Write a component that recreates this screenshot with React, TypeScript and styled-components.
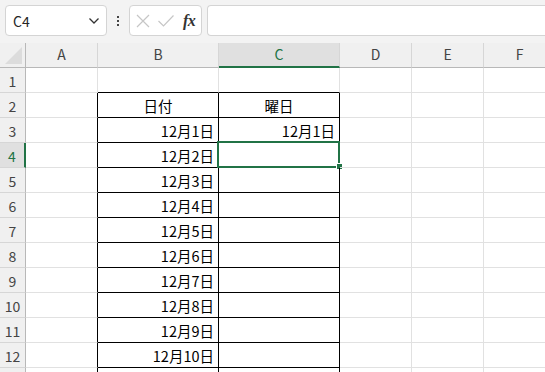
import React from "react";
import styled, { createGlobalStyle, css } from "styled-components";

const GlobalStyle = createGlobalStyle`
  html, body { margin: 0; padding: 0; background: #ffffff; overflow: hidden; }
  body { font-family: "Noto Sans CJK JP", "Noto Sans", sans-serif; }
  * { box-sizing: border-box; }
`;

const GREEN = "#217346";
const GRID = "#e1e1e1";

const Window = styled.div`
  width: 545px;
  height: 372px;
  overflow: hidden;
  background: #ffffff;
`;

const Toolbar = styled.div`
  height: 43px;
  background: #f3f3f3;
  display: flex;
  align-items: flex-start;
  padding: 5px 0 0 5px;
`;

const NameBox = styled.div`
  width: 102px;
  height: 31px;
  background: #ffffff;
  border: 1px solid #d4d4d4;
  border-radius: 4px;
  display: flex;
  align-items: center;
  justify-content: space-between;
  padding: 0 6px 0 7px;
  font-family: "Noto Sans CJK JP", sans-serif;
  font-size: 14px;
  color: #262626;
`;

const Dots = styled.div`
  width: 2px;
  height: 31px;
  margin: 0 10px 0 10px;
  display: flex;
  flex-direction: column;
  justify-content: center;
  gap: 2px;
  & > span {
    width: 2px;
    height: 2px;
    background: #444;
  }
`;

const FormulaButtons = styled.div`
  width: 73px;
  height: 31px;
  background: #ffffff;
  border: 1px solid #d4d4d4;
  border-radius: 4px;
  display: flex;
  align-items: center;
  padding: 0 0 0 5px;
  gap: 6px;
`;

const Fx = styled.span`
  font-family: "Liberation Serif", "DejaVu Serif", serif;
  font-style: italic;
  font-weight: bold;
  font-size: 16px;
  color: #333;
  margin-left: 2px;
  letter-spacing: -0.5px;
`;

const FormulaInput = styled.div`
  flex: 1;
  height: 31px;
  margin-left: 5px;
  background: #ffffff;
  border: 1px solid #d4d4d4;
  border-right: none;
  border-radius: 4px 0 0 4px;
`;

const Sheet = styled.div`
  display: grid;
  grid-template-columns: 26px 72px 121px 121px 72px 72px 72px;
  grid-auto-rows: 25px;
  font-family: "Noto Sans CJK JP", "Noto Sans", sans-serif;
`;

const Corner = styled.div`
  position: relative;
  background: #f0f0f0;
  border-right: 1px solid #b8b8b8;
  border-bottom: 1px solid #b8b8b8;
  overflow: hidden;
  & > svg { position: absolute; right: 3px; bottom: 3px; }
`;

const ColHeader = styled.div<{ $active?: boolean }>`
  background: ${(p) => (p.$active ? "#e0e0e0" : "#f0f0f0")};
  border-right: 1px solid #d6d6d6;
  border-bottom: ${(p) => (p.$active ? `2px solid ${GREEN}` : "1px solid #b8b8b8")};
  color: ${(p) => (p.$active ? GREEN : "#444")};
  font-size: 14px;
  display: flex;
  align-items: center;
  justify-content: center;
  padding-bottom: ${(p) => (p.$active ? "1px" : "2px")};
`;

const RowHeader = styled.div<{ $active?: boolean }>`
  background: ${(p) => (p.$active ? "#e0e0e0" : "#f0f0f0")};
  border-right: ${(p) => (p.$active ? `2px solid ${GREEN}` : "1px solid #b8b8b8")};
  border-bottom: 1px solid #d6d6d6;
  color: ${(p) => (p.$active ? GREEN : "#444")};
  font-size: 14px;
  display: flex;
  align-items: center;
  justify-content: center;
  padding-top: 1px;
`;

const Cell = styled.div<{ $right?: string; $bottom?: string; $align?: "left" | "center" | "right" }>`
  position: relative;
  border-right: 1px solid ${(p) => p.$right || GRID};
  border-bottom: 1px solid ${(p) => p.$bottom || GRID};
  font-size: 14.5px;
  color: #000;
  display: flex;
  align-items: center;
  padding: 1px 4px 0 4px;
  white-space: nowrap;
  ${(p) =>
    p.$align === "right"
      ? css`justify-content: flex-end;`
      : p.$align === "center"
      ? css`justify-content: center;`
      : css`justify-content: flex-start;`}
`;

const Selection = styled.div`
  position: absolute;
  left: -2px;
  top: -2px;
  width: 123px;
  height: 27px;
  border: 2px solid ${GREEN};
  pointer-events: none;
`;

const Handle = styled.div`
  position: absolute;
  left: 117px;
  top: 20px;
  width: 7px;
  height: 7px;
  background: ${GREEN};
  border: 1px solid #ffffff;
`;

const cols = ["A", "B", "C", "D", "E", "F"];
const dates = Array.from({ length: 10 }, (_, i) => `12月${i + 1}日`);
const VISIBLE_TEXT_ROWS = 12;

export default function App() {
  const rows = Array.from({ length: 13 }, (_, i) => i + 1);
  return (
    <Window>
      <GlobalStyle />
      <Toolbar>
        <NameBox>
          <span>C4</span>
          <svg width="12" height="8" viewBox="0 0 12 8">
            <path d="M1.5 1.5 L6 6 L10.5 1.5" fill="none" stroke="#333" strokeWidth="1.3" />
          </svg>
        </NameBox>
        <Dots>
          <span />
          <span />
          <span />
        </Dots>
        <FormulaButtons>
          <svg width="16" height="16" viewBox="0 0 16 16">
            <path d="M2 2 L14 14 M14 2 L2 14" stroke="#c6c6c6" strokeWidth="1.2" fill="none" />
          </svg>
          <svg width="18" height="16" viewBox="0 0 18 16">
            <path d="M1.5 8 L6.5 13 L16.5 2.5" stroke="#c6c6c6" strokeWidth="1.2" fill="none" />
          </svg>
          <Fx>fx</Fx>
        </FormulaButtons>
        <FormulaInput />
      </Toolbar>
      <Sheet>
        <Corner>
          <svg width="17" height="17" viewBox="0 0 17 17">
            <path d="M17 0 L17 17 L0 17 Z" fill="#dcdcdc" />
          </svg>
        </Corner>
        {cols.map((c) => (
          <ColHeader key={c} $active={c === "C"}>
            {c}
          </ColHeader>
        ))}
        {rows.map((r) => (
          <React.Fragment key={r}>
            <RowHeader $active={r === 4}>{r <= VISIBLE_TEXT_ROWS ? r : null}</RowHeader>
            {cols.map((c) => {
              const inTable = (c === "B" || c === "C") && r >= 2;
              let right: string | undefined;
              let bottom: string | undefined;
              if (inTable) {
                right = "#000";
                bottom = "#000";
              }
              if ((c === "B" || c === "C") && r === 1) bottom = "#000";
              if (c === "A" && r >= 2) right = "#000";
              let content: React.ReactNode = null;
              let align: "left" | "center" | "right" = "left";
              if (r === 2 && c === "B") {
                content = "日付";
                align = "center";
              } else if (r === 2 && c === "C") {
                content = "曜日";
                align = "center";
              } else if (c === "B" && r >= 3 && r <= VISIBLE_TEXT_ROWS) {
                content = dates[r - 3];
                align = "right";
              } else if (c === "C" && r === 3) {
                content = "12月1日";
                align = "right";
              }
              return (
                <Cell key={c} $right={right} $bottom={bottom} $align={align}>
                  {content}
                  {c === "C" && r === 4 && (
                    <>
                      <Selection />
                      <Handle />
                    </>
                  )}
                </Cell>
              );
            })}
          </React.Fragment>
        ))}
      </Sheet>
    </Window>
  );
}
